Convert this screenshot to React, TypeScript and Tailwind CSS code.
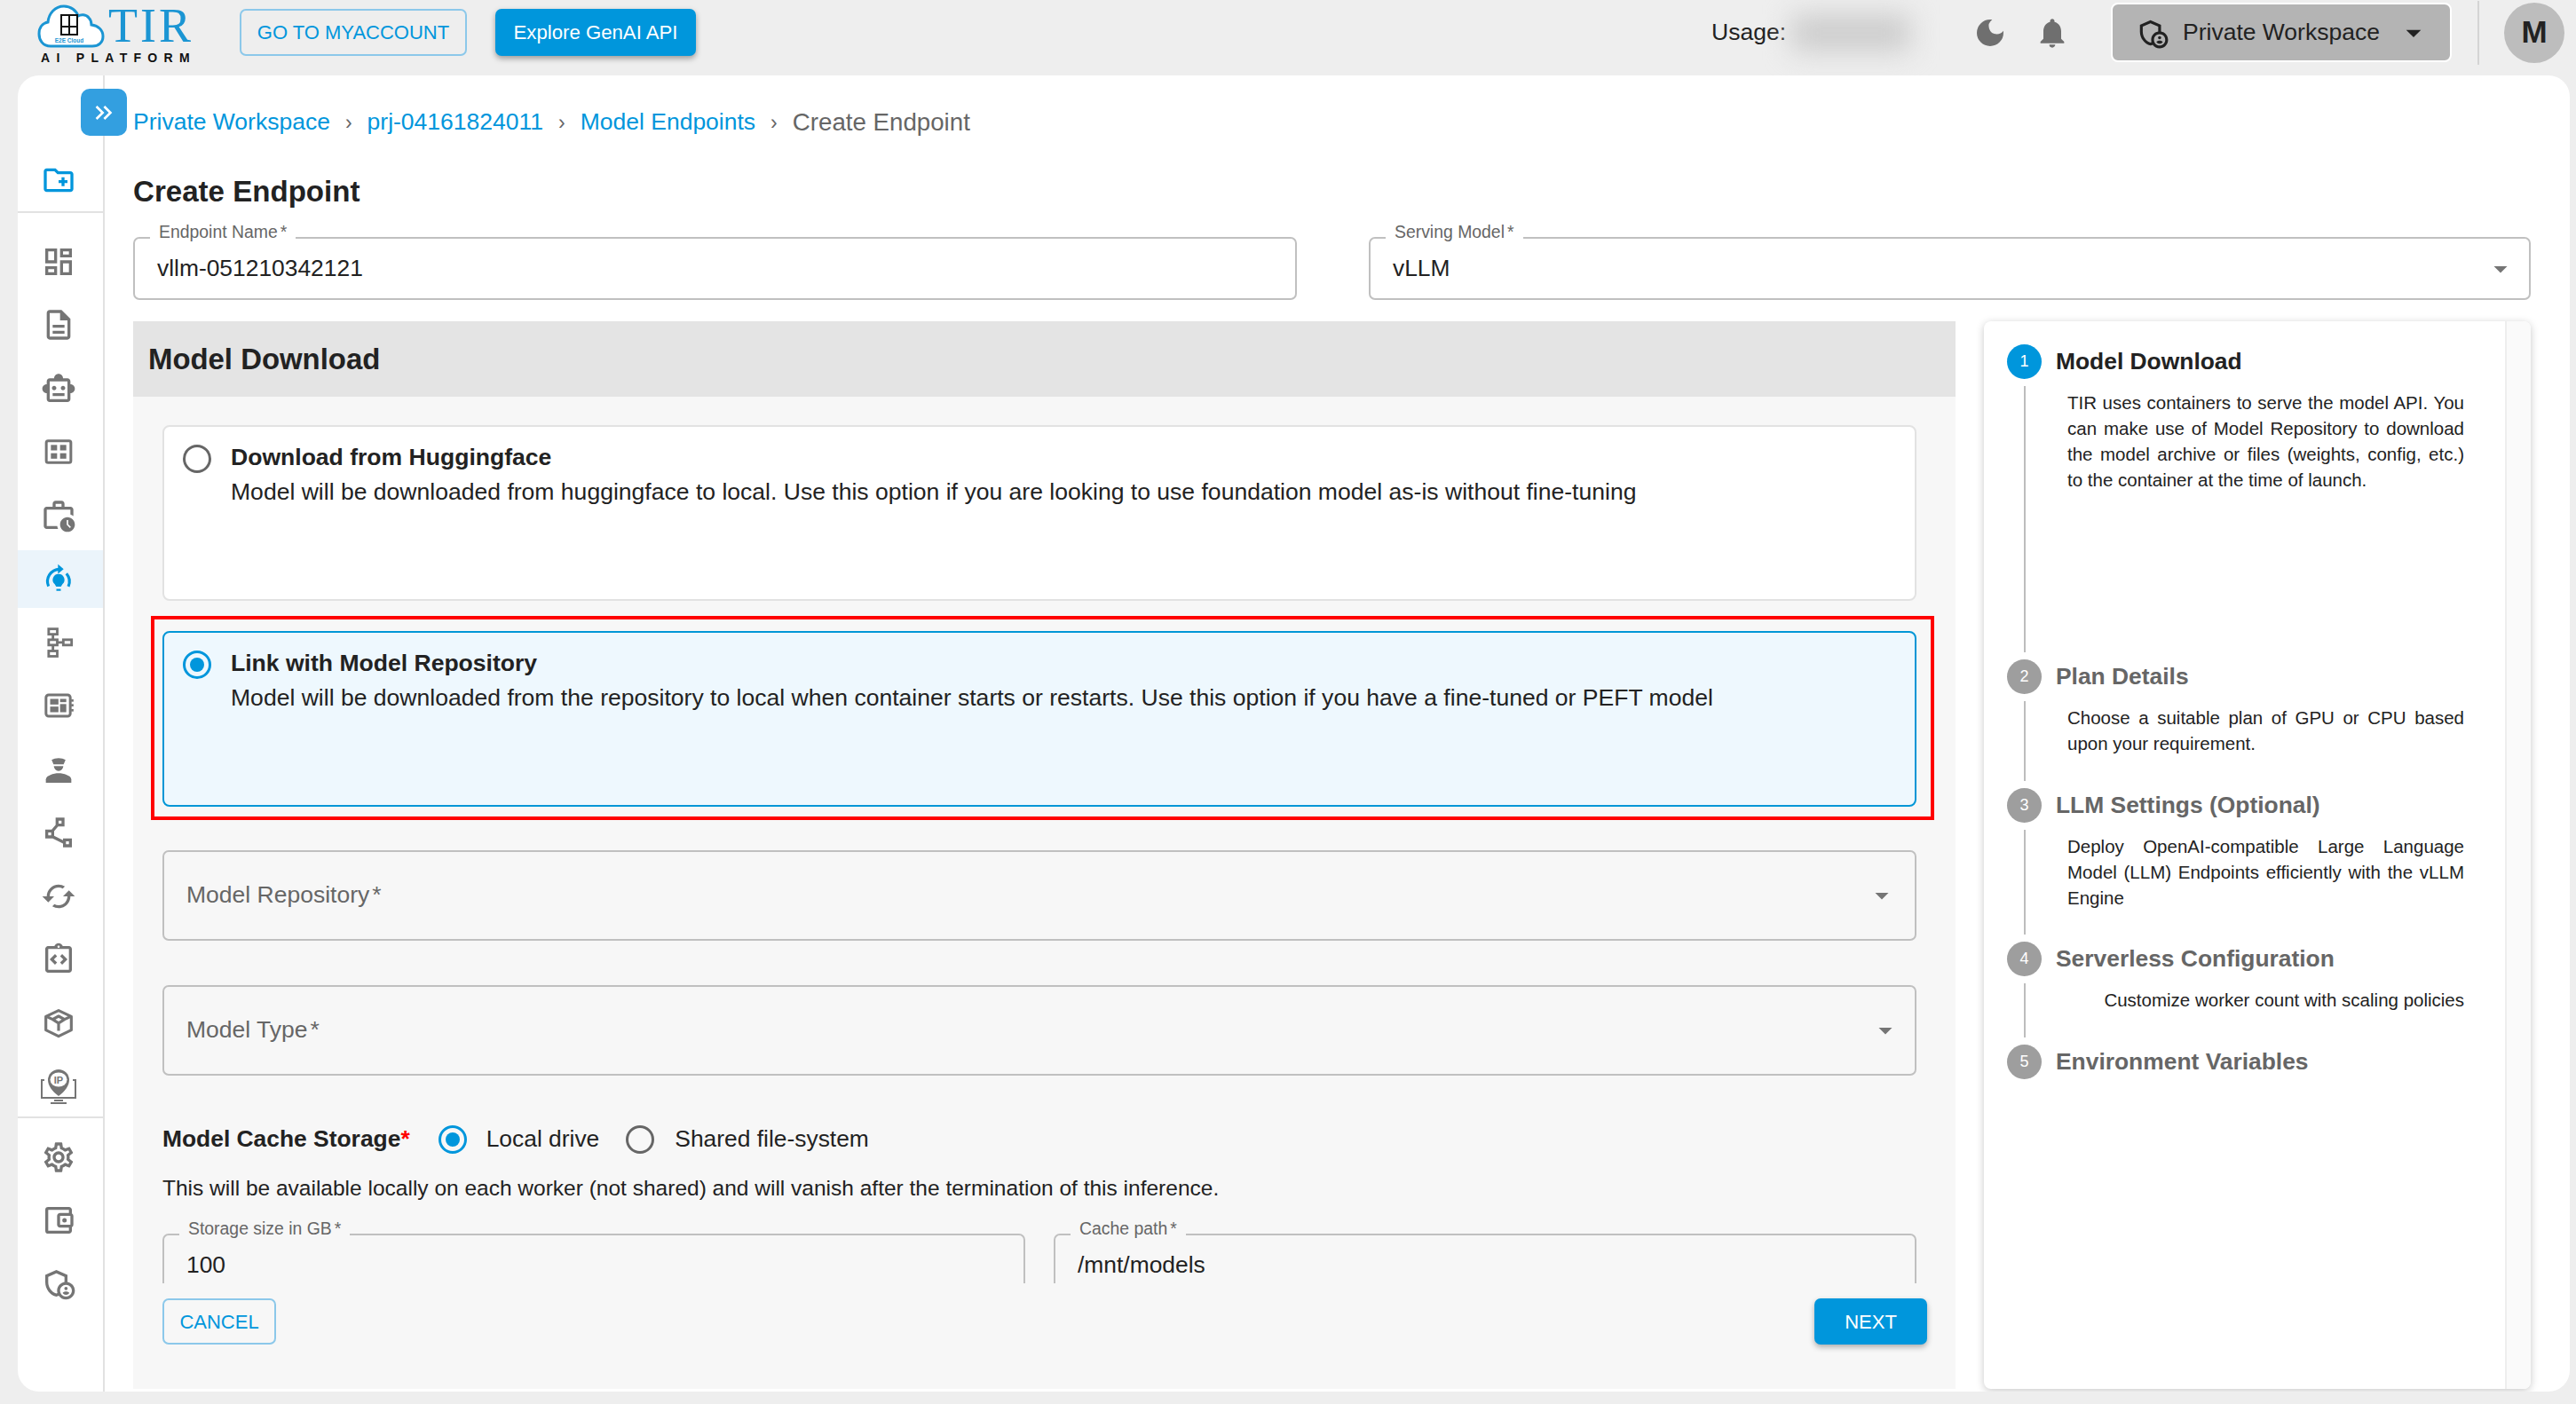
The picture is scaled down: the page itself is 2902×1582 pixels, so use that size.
import React from 'react';
import {
  MdOutlineCreateNewFolder, MdOutlineDashboard, MdOutlineDescription, MdOutlineSmartToy,
  MdOutlineWorkHistory, MdOutlinePolyline, MdCached, MdOutlineIntegrationInstructions,
  MdOutlineSettings, MdOutlineAccountBalanceWallet, MdOutlineAdminPanelSettings,
  MdDarkMode, MdNotifications, MdArrowDropDown, MdKeyboardDoubleArrowRight,
} from 'react-icons/md';

const GridIcon = () => (
  <svg width="40" height="40" viewBox="0 0 24 24" fill="#757575">
    <rect x="3.7" y="4.7" width="16.6" height="14.6" rx="1.2" fill="none" stroke="#757575" strokeWidth="1.8" />
    <rect x="6.8" y="7.4" width="4.2" height="3.7" /><rect x="13" y="7.4" width="4.2" height="3.7" />
    <rect x="6.8" y="13" width="4.2" height="3.7" /><rect x="13" y="13" width="4.2" height="3.7" />
  </svg>
);
const ActiveIcon = () => (
  <svg width="40" height="40" viewBox="0 0 24 24" fill="none" stroke="#0096dc" strokeWidth="1.9">
    <path d="M5.2 17.2A8.3 8.3 0 0 1 12.6 5.6" />
    <path d="M11.6 2.2l3.8 3.4-3.8 3.1z" fill="#0096dc" stroke="none" />
    <path d="M17.3 8.6A8.3 8.3 0 0 1 18.6 17.3" />
    <path d="M12 8.8a4 4 0 0 1 2.6 7l-1 1.6h-3.2l-1-1.6a4 4 0 0 1 2.6-7z" fill="#0096dc" stroke="none" />
    <path d="M10.5 19.6h3" strokeWidth="1.3" />
  </svg>
);
const TreeIcon = () => (
  <svg width="40" height="40" viewBox="0 0 24 24" fill="none" stroke="#757575" strokeWidth="1.7">
    <rect x="5.3" y="2.8" width="5.8" height="3.6" /><rect x="5.3" y="10.1" width="5.8" height="3.6" />
    <rect x="5.3" y="17.7" width="5.8" height="3.6" /><rect x="15.2" y="10.1" width="5.6" height="3.6" />
    <path d="M8.2 6.4v3.7M8.2 13.7v4M11.1 11.9h4.1" />
  </svg>
);
const BoardIcon = () => (
  <svg width="40" height="40" viewBox="0 0 24 24" fill="#757575">
    <rect x="3.5" y="4.8" width="16.4" height="14.4" rx="1.8" fill="none" stroke="#757575" strokeWidth="1.8" />
    <rect x="6.3" y="7.5" width="5.6" height="3.8" /><rect x="6.3" y="12.7" width="5.6" height="3.8" />
    <rect x="13" y="7.5" width="4.2" height="2.2" /><rect x="13" y="11" width="4.2" height="5.5" />
    <rect x="20.5" y="7.8" width="1.6" height="1.6" /><rect x="20.5" y="11" width="1.6" height="1.6" /><rect x="20.5" y="14.4" width="1.6" height="1.6" />
  </svg>
);
const PoliceIcon = () => (
  <svg width="40" height="40" viewBox="0 0 24 24" fill="#757575">
    <path d="M7.3 5.6C9.6 4 14.4 4 16.7 5.6L15.4 8.6H8.6Z" />
    <path d="M8.8 9.8h6.4a3.2 3.2 0 0 1-6.4 0z" />
    <path d="M3.4 21v-2.2c0-2.6 5.2-4.2 8.6-4.2s8.6 1.6 8.6 4.2V21z" />
  </svg>
);
const CubeIcon = () => (
  <svg width="40" height="40" viewBox="0 0 24 24" fill="none" stroke="#757575" strokeWidth="1.9" strokeLinejoin="round">
    <path d="M12 3.4l8.6 4v9.2L12 20.8l-8.6-4.2V7.4z" />
    <path d="M8 9.4L12 7.2l4 2.2-4 2.5zM12 11.9v5.2M8 9.4l-4.2-2M16 9.4l4.2-2" />
  </svg>
);
const IpIcon = () => (
  <svg width="42" height="42" viewBox="0 0 42 42">
    <path d="M5 14H2v20h38V14h-3" fill="none" stroke="#757575" strokeWidth="2" />
    <rect x="16" y="36" width="10" height="2" fill="#757575" /><rect x="12" y="39" width="18" height="2" fill="#757575" />
    <path d="M21 32C14 27 9 20 9 14a12 12 0 0 1 24 0c0 6-5 13-12 18z" fill="#757575" />
    <ellipse cx="21" cy="13.5" rx="9.5" ry="8" fill="#fff" />
    <text x="21" y="17.5" textAnchor="middle" fontSize="11" fontWeight="700" fill="#757575" fontFamily="Liberation Sans, sans-serif">IP</text>
  </svg>
);
const Logo = () => (
  <div className="relative w-[176px] h-[72px] shrink-0 -mt-[12px]">
    <svg className="absolute left-0 top-[3px]" width="76" height="50" viewBox="0 0 76 50" fill="#fff" stroke="#1b95d3" strokeWidth="3">
      <path d="M15 48C6 48 2 41 2 34c0-7 4-12 10-13C13 11 20 3 30 3c8 0 14 5 16 11 3-2 9-2 12 2 3 3 3 6 3 8 8 1 13 6 13 13 0 7-5 11-12 11z" />
      <rect x="27" y="13" width="9" height="13" fill="none" stroke="#111" strokeWidth="2" />
      <rect x="36" y="13" width="9" height="13" fill="none" stroke="#111" strokeWidth="2" />
      <rect x="27" y="26" width="9" height="9" fill="none" stroke="#111" strokeWidth="2" />
      <rect x="36" y="26" width="9" height="9" fill="none" stroke="#111" strokeWidth="2" />
      <text x="36" y="44" textAnchor="middle" fontSize="6.5" stroke="none" fill="#1b95d3" fontWeight="700" fontFamily="Liberation Sans, sans-serif">E2E Cloud</text>
    </svg>
    <span className="absolute left-[80px] top-[1px] text-[54px] leading-[54px] tracking-[3px] text-[#1b95d3] font-['Liberation_Serif',serif]">TIR</span>
    <span className="absolute left-[4px] top-[56px] text-[14px] leading-[16px] font-bold tracking-[7.3px] text-[#111] whitespace-nowrap">AI PLATFORM</span>
  </div>
);

const items: { icon: React.ReactNode; active?: boolean }[] = [
  { icon: <MdOutlineDashboard size={40} /> },
  { icon: <MdOutlineDescription size={40} /> },
  { icon: <MdOutlineSmartToy size={40} /> },
  { icon: <GridIcon /> },
  { icon: <MdOutlineWorkHistory size={40} /> },
  { icon: <ActiveIcon />, active: true },
  { icon: <TreeIcon /> },
  { icon: <BoardIcon /> },
  { icon: <PoliceIcon /> },
  { icon: <MdOutlinePolyline size={40} /> },
  { icon: <MdCached size={40} /> },
  { icon: <MdOutlineIntegrationInstructions size={40} /> },
  { icon: <CubeIcon /> },
  { icon: <IpIcon /> },
];
const bottomItems = [
  <MdOutlineSettings size={40} />,
  <MdOutlineAccountBalanceWallet size={40} />,
  <MdOutlineAdminPanelSettings size={40} />,
];

const Sidebar = () => (
  <aside className="w-[98px] shrink-0 border-r-2 border-[#e2e2e2] flex flex-col text-[#757575]">
    <div className="h-[155px] shrink-0 border-b-2 border-[#e2e2e2] flex items-end justify-center pb-[15px] pr-[4px] text-[#0096dc]">
      <MdOutlineCreateNewFolder size={40} />
    </div>
    <div className="flex flex-col gap-[6.5px] pt-[22px] pb-[1px] border-b-2 border-[#e2e2e2]">
      {items.map((it, i) => (
        <div key={i} className={it.active ? 'h-[65px] flex items-center justify-center pr-[4px] bg-[#ebf4fb]' : 'h-[65px] flex items-center justify-center pr-[4px]'}>
          {it.icon}
        </div>
      ))}
    </div>
    <div className="flex flex-col gap-[6px] pt-[12px]">
      {bottomItems.map((ic, i) => (
        <div key={i} className="h-[65px] flex items-center justify-center pr-[4px]">{ic}</div>
      ))}
    </div>
  </aside>
);

const Radio = ({ on }: { on?: boolean }) => (
  <span className={on ? 'shrink-0 w-[32px] h-[32px] rounded-full border-[3px] border-[#0096dc] flex items-center justify-center' : 'shrink-0 w-[32px] h-[32px] rounded-full border-[3px] border-[#666] flex items-center justify-center'}>
    {on && <span className="w-[16px] h-[16px] rounded-full bg-[#0096dc]" />}
  </span>
);

const Field = ({ label, value, bg, select, className }: { label: string; value: string; bg: string; select?: boolean; className: string }) => (
  <div className={`relative h-[71px] rounded-[7px] border-2 border-[#c0c0c0] flex items-center pl-[25px] pr-[14px] text-[26.4px] text-[#222] ${className}`}>
    <span className={`absolute left-[17px] -top-[20px] h-[24px] px-[10px] text-[19.4px] leading-[24px] text-[#666] whitespace-nowrap ${bg}`}>{label}<span className="ml-[3px]">*</span></span>
    <span className="flex-1">{value}</span>
    {select && <MdArrowDropDown size={36} className="text-[#757575]" />}
  </div>
);

const SelectBox = ({ label, iconClass }: { label: string; iconClass: string }) => (
  <div className="h-[102px] rounded-[7px] border-2 border-[#c0c0c0] flex items-center pl-[25px] text-[26.5px] text-[#666]">
    <span className="flex-1">{label}<span className="ml-[3px]">*</span></span>
    <MdArrowDropDown size={36} className={`text-[#757575] ${iconClass}`} />
  </div>
);

const Card = ({ on, title, desc }: { on?: boolean; title: string; desc: string }) => (
  <div className={on ? 'h-[198px] rounded-[8px] border-2 border-[#0096d6] bg-[#eef8fe] flex items-start gap-[22px] pl-[21px] pt-[20px]' : 'h-[198px] rounded-[8px] border-2 border-[#e2e2e2] bg-white flex items-start gap-[22px] pl-[21px] pt-[20px]'}>
    <Radio on={on} />
    <div className="-mt-[5px] text-[26.55px] leading-[39px] text-[#222]">
      <div className="font-bold">{title}</div>
      <div>{desc}</div>
    </div>
  </div>
);

const steps = [
  { n: 1, title: 'Model Download', active: true, h: 'h-[300px]', text: 'TIR uses containers to serve the model API. You can make use of Model Repository to download the model archive or files (weights, config, etc.) to the container at the time of launch.' },
  { n: 2, title: 'Plan Details', h: 'h-[90px]', text: 'Choose a suitable plan of GPU or CPU based upon your requirement.' },
  { n: 3, title: 'LLM Settings (Optional)', h: 'h-[118px]', text: 'Deploy OpenAI-compatible Large Language Model (LLM) Endpoints efficiently with the vLLM Engine' },
  { n: 4, title: 'Serverless Configuration', h: 'h-[61px]', right: true, text: 'Customize worker count with scaling policies' },
  { n: 5, title: 'Environment Variables' },
] as { n: number; title: string; active?: boolean; h?: string; right?: boolean; text?: string }[];

const Stepper = () => (
  <div className="w-[616px] shrink-0 rounded-[8px] bg-white shadow-[0_2px_10px_rgba(0,0,0,0.22)] flex overflow-hidden">
    <div className="flex-1 pl-[26px] pr-[46px] pt-[26px]">
      {steps.map((s) => (
        <div key={s.n}>
          <div className="flex items-center gap-[16px] h-[39px]">
            <span className={s.active ? 'w-[39px] h-[39px] rounded-full bg-[#0096dc] text-white text-[18px] flex items-center justify-center' : 'w-[39px] h-[39px] rounded-full bg-[#9e9e9e] text-white text-[18px] flex items-center justify-center'}>{s.n}</span>
            <span className={s.active ? 'text-[26.4px] font-bold text-[#222]' : 'text-[26.4px] font-bold text-[#666]'}>{s.title}</span>
          </div>
          {s.text && (
            <div className={`ml-[19px] my-[8px] border-l-2 border-[#bdbdbd] pl-[47px] pt-[4px] text-[20.5px] leading-[29px] text-[#222] ${s.h} ${s.right ? 'text-right' : 'text-justify'}`}>
              {s.text}
            </div>
          )}
        </div>
      ))}
    </div>
    <div className="w-[29px] shrink-0 border-l-2 border-[#eeeeee] bg-[#fafafa]" />
  </div>
);

const Sep = () => <span className="mx-[17px] text-[23px] text-[#666]">›</span>;

export default function App() {
  return (
    <div className="w-[2902px] h-[1582px] bg-[#eeeeee] overflow-hidden flex flex-col font-['Liberation_Sans',Arial,sans-serif]">
      <header className="h-[85px] shrink-0 flex items-center pl-[42px] pr-[13px]">
        <Logo />
        <button className="ml-[52px] w-[256px] h-[53px] rounded-[7px] border-2 border-[#8cc8ea] text-[22px] text-[#0096dc] -mt-[12px]">GO TO MYACCOUNT</button>
        <button className="ml-[32px] w-[226px] h-[53px] rounded-[7px] bg-[#0096dc] text-[22.2px] text-white shadow-[0_3px_6px_rgba(0,0,0,0.35)] -mt-[12px]">Explore GenAI API</button>
        <div className="flex-1" />
        <div className="flex items-center -mt-[12px]">
          <span className="text-[26.5px] text-[#222]">Usage:</span>
          <div className="ml-[6px] w-[161px] h-[70px] flex items-center justify-start">
            <div className="w-[134px] h-[42px] bg-[#cdcdcd] blur-[15px]" />
          </div>
          <MdDarkMode size={40} className="ml-[43px] text-[#6f6f6f]" />
          <MdNotifications size={40} className="ml-[30px] text-[#6f6f6f]" />
          <button className="ml-[46px] w-[384px] h-[67px] rounded-[8px] border-2 border-white bg-[#b4b4b4] flex items-center pl-[26px] text-[26.5px] text-[#222]">
            <MdOutlineAdminPanelSettings size={38} className="text-[#222]" />
            <span className="ml-[15px]">Private Workspace</span>
            <MdArrowDropDown size={40} className="ml-[18px]" />
          </button>
          <div className="ml-[29px] w-[2px] h-[72px] bg-[#d4d4d4]" />
          <div className="ml-[28px] w-[68px] h-[68px] rounded-full bg-[#bdbdbd] flex items-center justify-center text-[35px] font-bold text-[#222]">M</div>
        </div>
      </header>

      <div className="relative mx-[20px] mr-[7px] h-[1483px] rounded-[24px] bg-white flex overflow-hidden">
        <Sidebar />
        <button className="absolute left-[71px] top-[15px] w-[52px] h-[53px] rounded-[10px] bg-[#339fe0] flex items-center justify-center text-white">
          <MdKeyboardDoubleArrowRight size={32} />
        </button>
        <main className="flex-1 min-w-0 pl-[32px] pr-[44px] flex flex-col">
          <nav className="mt-[33px] h-[40px] flex items-center text-[26.5px] text-[#0096dc] shrink-0">
            <span>Private Workspace</span><Sep />
            <span>prj-04161824011</span><Sep />
            <span>Model Endpoints</span><Sep />
            <span className="text-[#666] text-[27.7px]">Create Endpoint</span>
          </nav>
          <h1 className="mt-[38px] h-[40px] text-[33.1px] leading-[40px] font-bold text-[#222] shrink-0">Create Endpoint</h1>
          <div className="mt-[31px] flex gap-[81px] shrink-0">
            <Field label="Endpoint Name" value="vllm-051210342121" bg="bg-white" className="w-[1311px]" />
            <Field label="Serving Model" value="vLLM" bg="bg-white" select className="flex-1" />
          </div>
          <div className="mt-[24px] flex gap-[32px] flex-1 min-h-0 pb-[3px]">
            <section className="flex-1 min-w-0 bg-[#f7f7f7] flex flex-col">
              <h2 className="h-[85px] shrink-0 bg-[#e4e4e4] pl-[17px] flex items-center text-[32.9px] font-bold text-[#222]">Model Download</h2>
              <div className="h-[999px] shrink-0 overflow-hidden pl-[33px] pr-[44px] pt-[32px]">
                <Card title="Download from Huggingface" desc="Model will be downloaded from huggingface to local. Use this option if you are looking to use foundation model as-is without fine-tuning" />
                <div className="relative mt-[34px]">
                  <Card on title="Link with Model Repository" desc="Model will be downloaded from the repository to local when container starts or restarts. Use this option if you have a fine-tuned or PEFT model" />
                  <div className="absolute -left-[13px] -right-[20px] -top-[17px] -bottom-[15px] border-[4px] border-[#ff0000]" />
                </div>
                <div className="mt-[49px]"><SelectBox label="Model Repository" iconClass="mr-[19px]" /></div>
                <div className="mt-[50px]"><SelectBox label="Model Type" iconClass="mr-[15px]" /></div>
                <div className="mt-[52px] h-[40px] flex items-center text-[26.4px] text-[#222]">
                  <span className="font-bold">Model Cache Storage<span className="text-[#ff0000]">*</span></span>
                  <span className="ml-[32px]"><Radio on /></span>
                  <span className="ml-[22px]">Local drive</span>
                  <span className="ml-[30px]"><Radio /></span>
                  <span className="ml-[23px]">Shared file-system</span>
                </div>
                <div className="mt-[15px] h-[40px] flex items-center text-[24.5px] text-[#222]">This will be available locally on each worker (not shared) and will vanish after the termination of this inference.</div>
                <div className="mt-[31px] flex gap-[32px]">
                  <Field label="Storage size in GB" value="100" bg="bg-[#f7f7f7]" className="w-[972px]" />
                  <Field label="Cache path" value="/mnt/models" bg="bg-[#f7f7f7]" className="flex-1" />
                </div>
              </div>
              <div className="mt-[17px] pl-[33px] pr-[32px] flex justify-between">
                <button className="w-[128px] h-[52px] rounded-[7px] border-2 border-[#8cc8ea] text-[22px] text-[#0096dc]">CANCEL</button>
                <button className="w-[127px] h-[52px] rounded-[7px] bg-[#0096dc] text-[22px] text-white shadow-[0_3px_6px_rgba(0,0,0,0.3)]">NEXT</button>
              </div>
            </section>
            <Stepper />
          </div>
        </main>
      </div>
    </div>
  );
}
